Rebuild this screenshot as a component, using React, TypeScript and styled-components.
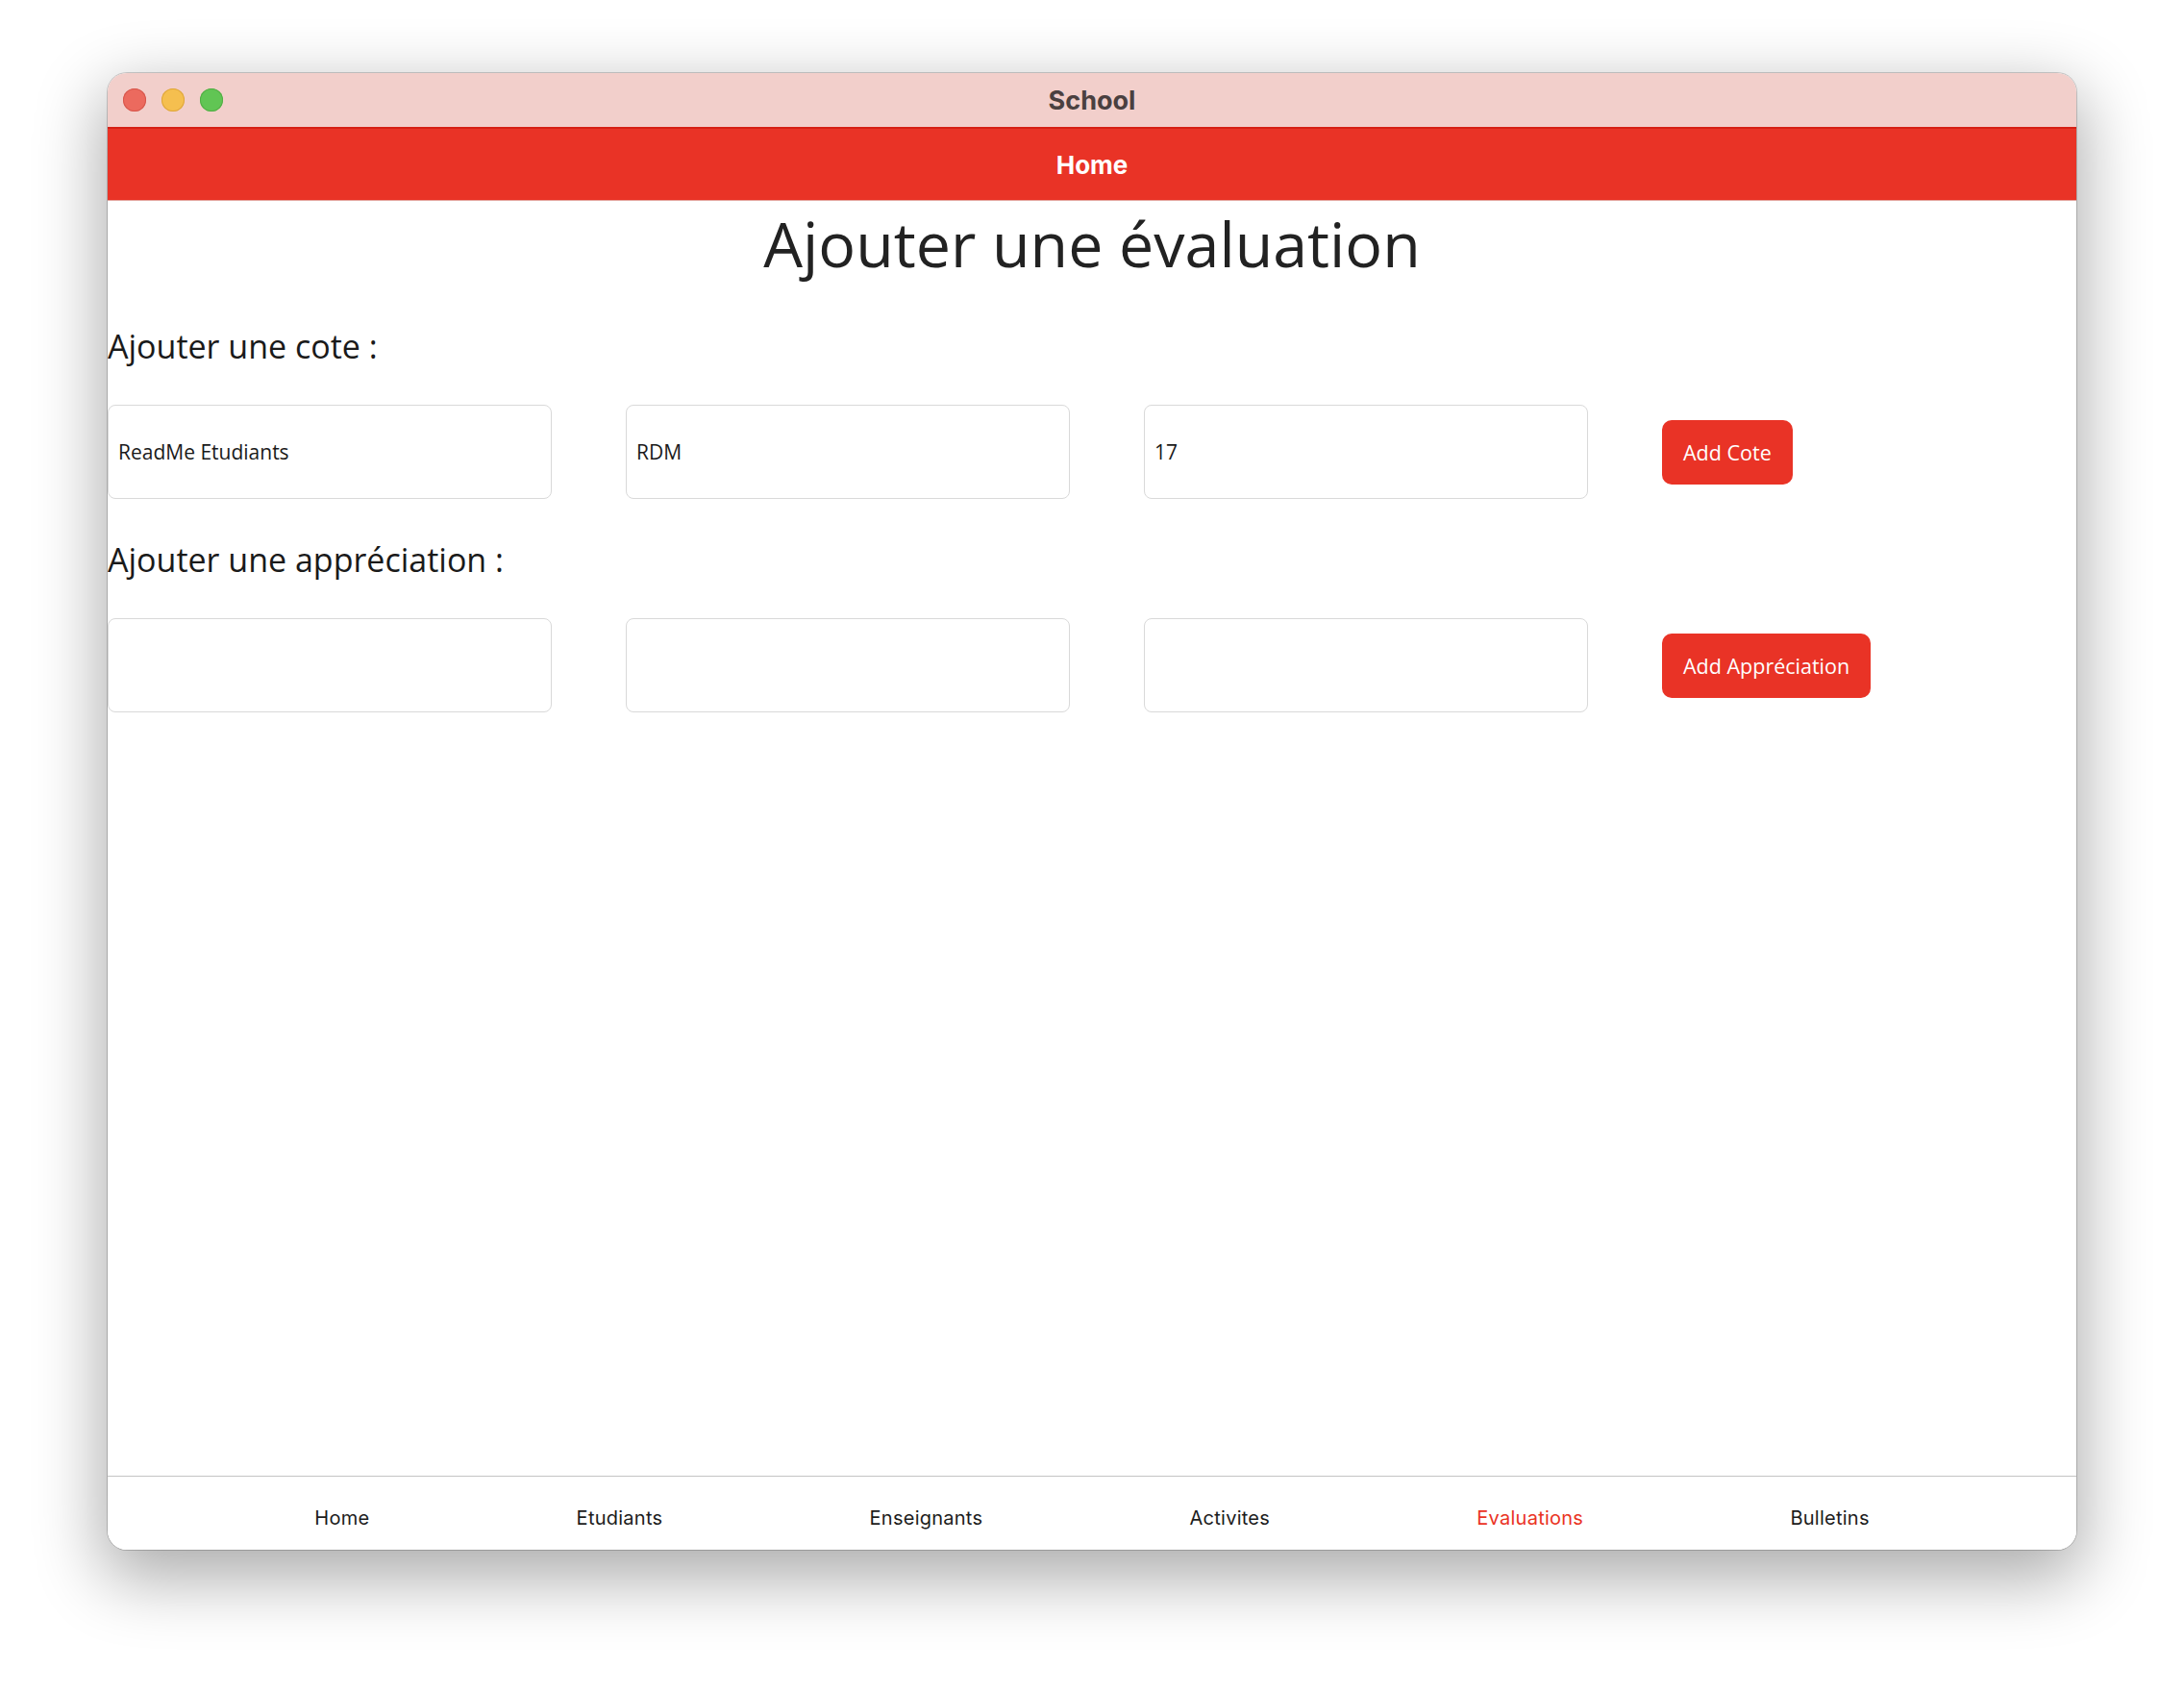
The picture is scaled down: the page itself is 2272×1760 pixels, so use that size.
import React from "react";
import styled, { createGlobalStyle } from "styled-components";

const GlobalStyle = createGlobalStyle`
  html, body {
    margin: 0;
    padding: 0;
    background: #ffffff;
  }
  * { box-sizing: border-box; }
`;

const Stage = styled.div`
  width: 2272px;
  height: 1760px;
  display: flex;
  justify-content: center;
  align-items: flex-start;
  padding-top: 76px;
  background: #ffffff;
`;

const Window = styled.div`
  width: 2048px;
  height: 1536px;
  border-radius: 20px;
  overflow: hidden;
  background: #ffffff;
  display: flex;
  flex-direction: column;
  box-shadow: 0 0 0 1px rgba(0, 0, 0, 0.18), 0 24px 70px 6px rgba(0, 0, 0, 0.33);
`;

const TitleBar = styled.div`
  height: 56px;
  flex: none;
  background: #f2cfcb;
  display: grid;
  grid-template-columns: 1fr auto 1fr;
  align-items: center;
`;

const Lights = styled.div`
  display: flex;
  gap: 16px;
  padding-left: 16px;
`;

const Light = styled.span<{ $color: string; $edge: string }>`
  width: 24px;
  height: 24px;
  border-radius: 50%;
  background: ${(p) => p.$color};
  box-shadow: inset 0 0 0 1px ${(p) => p.$edge};
`;

const WindowTitle = styled.div`
  font-family: Inter, "Liberation Sans", sans-serif;
  font-weight: 700;
  font-size: 27px;
  color: #4a4040;
`;

const Header = styled.div`
  height: 77px;
  flex: none;
  background: #e93326;
  border-top: 2px solid #d62015;
  border-bottom: 1px solid #e5a9a3;
  display: flex;
  align-items: center;
  justify-content: center;
  font-family: Inter, "Liberation Sans", sans-serif;
  font-weight: 700;
  font-size: 26px;
  color: #ffffff;
`;

const Content = styled.main`
  flex: 1;
  display: flex;
  flex-direction: column;
  font-family: "Open Sans", "Noto Sans", sans-serif;
  color: #1c1c1c;
`;

const PageTitle = styled.h1`
  margin: 0;
  font-size: 64.5px;
  font-weight: 400;
  line-height: normal;
  text-align: center;
  color: #222222;
`;

const SectionLabel = styled.h2`
  margin: 40px 0 38px;
  font-size: 34px;
  font-weight: 400;
  line-height: normal;
  color: #1a1a1a;
`;

const FormRow = styled.div`
  display: flex;
  align-items: center;
  gap: 77px;
`;

const Field = styled.input`
  width: 462px;
  height: 98px;
  border: 1px solid #d9d9d9;
  border-radius: 8px;
  padding: 0 10px;
  font-family: "Open Sans", "Noto Sans", sans-serif;
  font-size: 21px;
  color: #1a1a1a;
  background: #ffffff;
  outline: none;
`;

const ActionButton = styled.button`
  height: 67px;
  padding: 0 22px;
  border: none;
  border-radius: 10px;
  background: #e93326;
  color: #ffffff;
  font-family: "Open Sans", "Noto Sans", sans-serif;
  font-size: 21.5px;
  cursor: pointer;
`;

const TabBar = styled.nav`
  height: 77px;
  flex: none;
  border-top: 1px solid #c4c4c4;
  padding-top: 9px;
  display: flex;
  justify-content: space-evenly;
  align-items: center;
  background: #ffffff;
`;

const TabItem = styled.span<{ $active?: boolean }>`
  font-family: Inter, "Liberation Sans", sans-serif;
  font-size: 20px;
  letter-spacing: 0.25px;
  color: ${(p) => (p.$active ? "#ea3323" : "#1c1c1c")};
`;

const tabs = ["Home", "Etudiants", "Enseignants", "Activites", "Evaluations", "Bulletins"];

export default function App() {
  return (
    <>
      <GlobalStyle />
      <Stage>
        <Window>
          <TitleBar>
            <Lights>
              <Light $color="#ec6a5e" $edge="#d6574c" />
              <Light $color="#f5bf4f" $edge="#dea63b" />
              <Light $color="#61c554" $edge="#52ad45" />
            </Lights>
            <WindowTitle>School</WindowTitle>
            <div />
          </TitleBar>
          <Header>Home</Header>
          <Content>
            <PageTitle>Ajouter une évaluation</PageTitle>
            <SectionLabel>Ajouter une cote :</SectionLabel>
            <FormRow>
              <Field defaultValue="ReadMe Etudiants" />
              <Field defaultValue="RDM" />
              <Field defaultValue="17" />
              <ActionButton>Add Cote</ActionButton>
            </FormRow>
            <SectionLabel>Ajouter une appréciation :</SectionLabel>
            <FormRow>
              <Field />
              <Field />
              <Field />
              <ActionButton>Add Appréciation</ActionButton>
            </FormRow>
          </Content>
          <TabBar>
            {tabs.map((t) => (
              <TabItem key={t} $active={t === "Evaluations"}>
                {t}
              </TabItem>
            ))}
          </TabBar>
        </Window>
      </Stage>
    </>
  );
}
